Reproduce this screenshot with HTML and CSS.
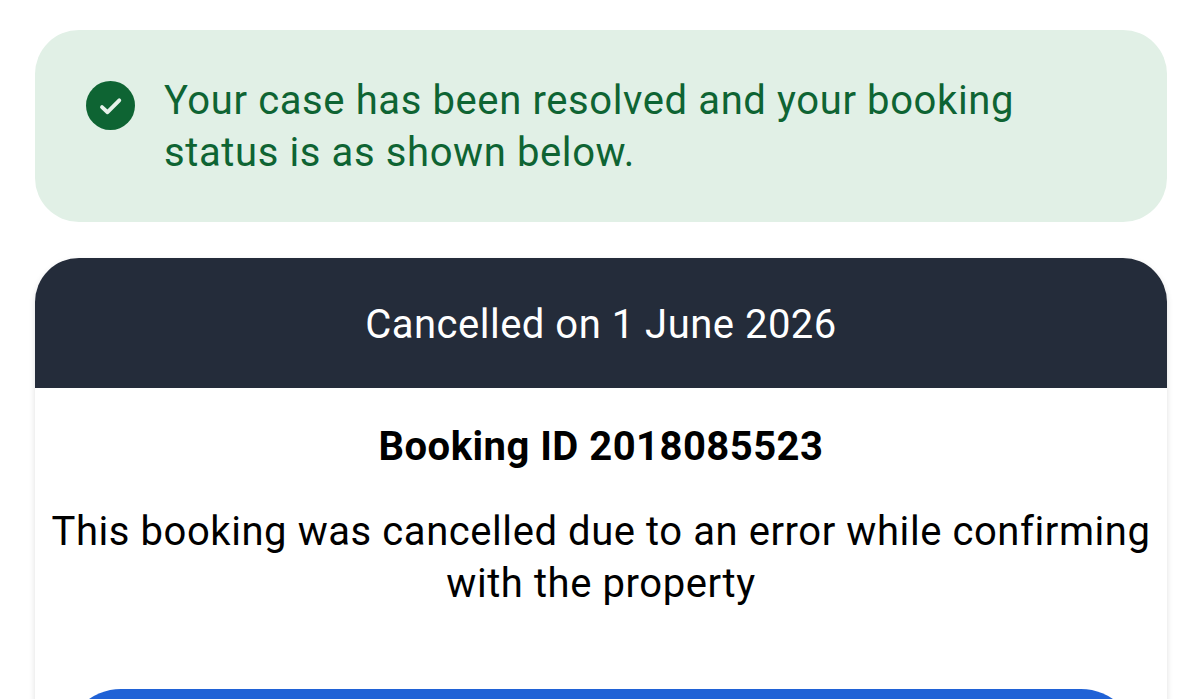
FILE: index.html
```html
<!DOCTYPE html>
<html lang="en">
<head>
<meta charset="utf-8">
<title>Booking status</title>
<link rel="stylesheet" href="styles.css">
</head>
<body>
<main class="page">
  <section class="alert">
    <svg class="alert-icon" viewBox="0 0 48 48" aria-hidden="true">
      <circle cx="24" cy="24" r="24" fill="#0e6433"/>
      <path d="M15.7 25.6l5.4 5L32.6 19" fill="none" stroke="#e6f2ea" stroke-width="3.8" stroke-linecap="round" stroke-linejoin="round"/>
    </svg>
    <p class="alert-text">Your case has been resolved and your booking status is as shown below.</p>
  </section>
  <section class="card">
    <header class="card-head">Cancelled on 1 June 2026</header>
    <div class="card-body">
      <h2 class="booking-id">Booking ID 2018085523</h2>
      <p class="reason">This booking was cancelled due to an error while confirming with the property</p>
      <button class="action" type="button"></button>
    </div>
  </section>
</main>
</body>
</html>
```
FILE: styles.css
```css
html, body {
  margin: 0;
  height: 699px;
  overflow: hidden;
  background: #fff;
}
.page {
  display: flex;
  flex-direction: column;
  gap: 36px;
  height: 699px;
  box-sizing: border-box;
  overflow: hidden;
  padding: 30px 33px 0 35px;
  font-family: Roboto, "Liberation Sans", sans-serif;
}
.alert {
  display: flex;
  flex: none;
  align-items: flex-start;
  gap: 29px;
  height: 192px;
  box-sizing: border-box;
  padding: 45px 120px 0 51px;
  background: #e1f0e6;
  border-radius: 44px;
}
.alert-icon {
  flex: none;
  width: 49px;
  height: 49px;
  margin-top: 6px;
}
.alert-text {
  margin: 0;
  font-size: 40px;
  line-height: 52px;
  letter-spacing: 0.61px;
  color: #0e6433;
}
.card {
  flex: none;
  border-radius: 44px 44px 0 0;
  box-shadow: 0 3px 6px rgba(0, 0, 0, 0.13);
  overflow: hidden;
}
.card-head {
  height: 130px;
  padding-top: 2px;
  box-sizing: border-box;
  display: flex;
  align-items: center;
  justify-content: center;
  background: #242c3a;
  color: #fff;
  font-size: 40px;
  letter-spacing: 0.5px;
}
.card-body {
  display: flex;
  flex-direction: column;
  align-items: center;
  padding: 0 10px;
  background: #fff;
  text-align: center;
  color: #000;
}
.booking-id {
  margin: 33px 0 0;
  font-size: 40px;
  line-height: 52px;
  font-weight: 700;
  letter-spacing: 0.47px;
}
.reason {
  margin: 33px 0 0;
  font-size: 40px;
  line-height: 52px;
  letter-spacing: 0.57px;
}
.action {
  flex: none;
  width: 1072px;
  height: 120px;
  margin-top: 79px;
  border: 0;
  border-radius: 56px;
  background: #2062d6;
}
```
